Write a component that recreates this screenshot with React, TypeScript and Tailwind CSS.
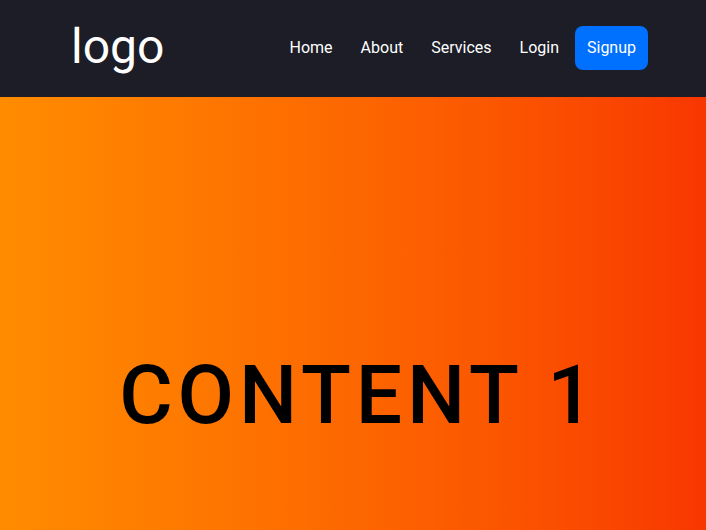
import React from "react";

const links = ["Home", "About", "Services", "Login"];

export default function App() {
  return (
    <div className="w-full font-['Roboto',sans-serif]">
      <header className="flex h-[97px] items-center justify-between bg-[#1c1d26] pl-[71px] pr-[58px]">
        <div className="pb-[4px] text-[48px] leading-none text-white">logo</div>
        <nav className="flex items-center gap-1 pb-[2px]">
          {links.map((l) => (
            <a key={l} href="#" className="px-3 py-2 text-base text-white">
              {l}
            </a>
          ))}
          <a href="#" className="rounded-lg bg-[#0070ff] px-3 py-[10px] text-base text-white">
            Signup
          </a>
        </nav>
      </header>
      <section className="flex h-[596px] items-center justify-center bg-gradient-to-r from-[#ff8c00] to-[#f83600]">
        <h1 className="pl-[12px] text-[82px] font-medium leading-none tracking-[0.06em] text-black">
          CONTENT 1
        </h1>
      </section>
    </div>
  );
}
